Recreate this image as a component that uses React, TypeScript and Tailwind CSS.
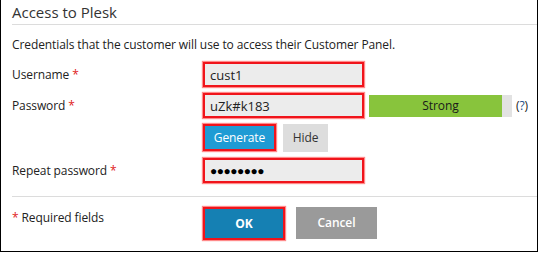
export default function App() {
  return (
    <div
      className="w-[538px] h-[252px] bg-white border-l border-r border-b border-black text-[#222] text-[12px] leading-[18px] tracking-[-0.1px]"
      style={{ fontFamily: '"Open Sans", "Liberation Sans", sans-serif' }}
    >
      <div className="ml-[11px] h-[25px] flex items-center border-b border-[#dcdcdc]">
        <h2 className="text-[15px] text-[#333] tracking-normal">Access to Plesk</h2>
      </div>

      <p className="ml-[11px] mt-[11px]">
        Credentials that the customer will use to access their Customer Panel.
      </p>

      <div className="ml-[11px] mt-[8px] flex items-center">
        <label className="w-[191px]">
          Username <span className="text-[#e0201b]">*</span>
        </label>
        <div className="w-[161px] h-[25px] bg-[#ececec] border-2 border-[#f0141b] shadow-[0_0_1px_1px_#ff8a8a] flex items-center px-[5px] text-[13px] tracking-normal">
          cust1
        </div>
      </div>

      <div className="ml-[11px] mt-[6px] flex items-center">
        <label className="w-[191px]">
          Password <span className="text-[#e0201b]">*</span>
        </label>
        <div className="w-[161px] h-[25px] bg-[#ececec] border-2 border-[#f0141b] shadow-[0_0_1px_1px_#ff8a8a] flex items-center px-[5px] text-[13px] tracking-normal">
          uZk#k183
        </div>
        <div className="relative ml-[5px] w-[143px] h-[22px] bg-[#e2e2e2] flex">
          <div className="w-[133px] bg-[#88c43c]" />
          <span className="absolute inset-0 flex items-center justify-center text-[#1a1a1a]">
            Strong
          </span>
        </div>
        <span className="ml-[4px]">
          (<span className="text-[#1c4f8a]">?</span>)
        </span>
      </div>

      <div className="ml-[202px] mt-[6px] flex items-start gap-[7px]">
        <button className="w-[73px] h-[27px] bg-[#1f9bd4] text-white border-2 border-[#f0141b] shadow-[0_0_1px_1px_#ff8a8a]">
          Generate
        </button>
        <button className="w-[45px] h-[28px] bg-[#dddddd] text-[#333]">Hide</button>
      </div>

      <div className="ml-[11px] mt-[6px] flex items-center">
        <label className="w-[191px]">
          Repeat password <span className="text-[#e0201b]">*</span>
        </label>
        <div className="w-[161px] h-[25px] bg-[#ececec] border-2 border-[#f0141b] shadow-[0_0_1px_1px_#ff8a8a] flex items-center px-[5px] text-[12px] tracking-[-0.5px] text-black">
          ●●●●●●●●
        </div>
      </div>

      <div className="ml-[11px] mt-[13px] border-t border-[#dcdcdc] pt-[10px] flex items-start">
        <p className="w-[191px] pt-[2px]">
          <span className="text-[#e0201b]">*</span> Required fields
        </p>
        <div className="flex gap-[11px]">
          <button className="w-[82px] h-[33px] bg-[#1580b3] text-white font-bold border-2 border-[#f0141b] shadow-[0_0_1px_1px_#ff8a8a]">
            OK
          </button>
          <button className="w-[81px] h-[32px] bg-[#9a9a9a] text-white font-semibold">
            Cancel
          </button>
        </div>
      </div>
    </div>
  );
}
